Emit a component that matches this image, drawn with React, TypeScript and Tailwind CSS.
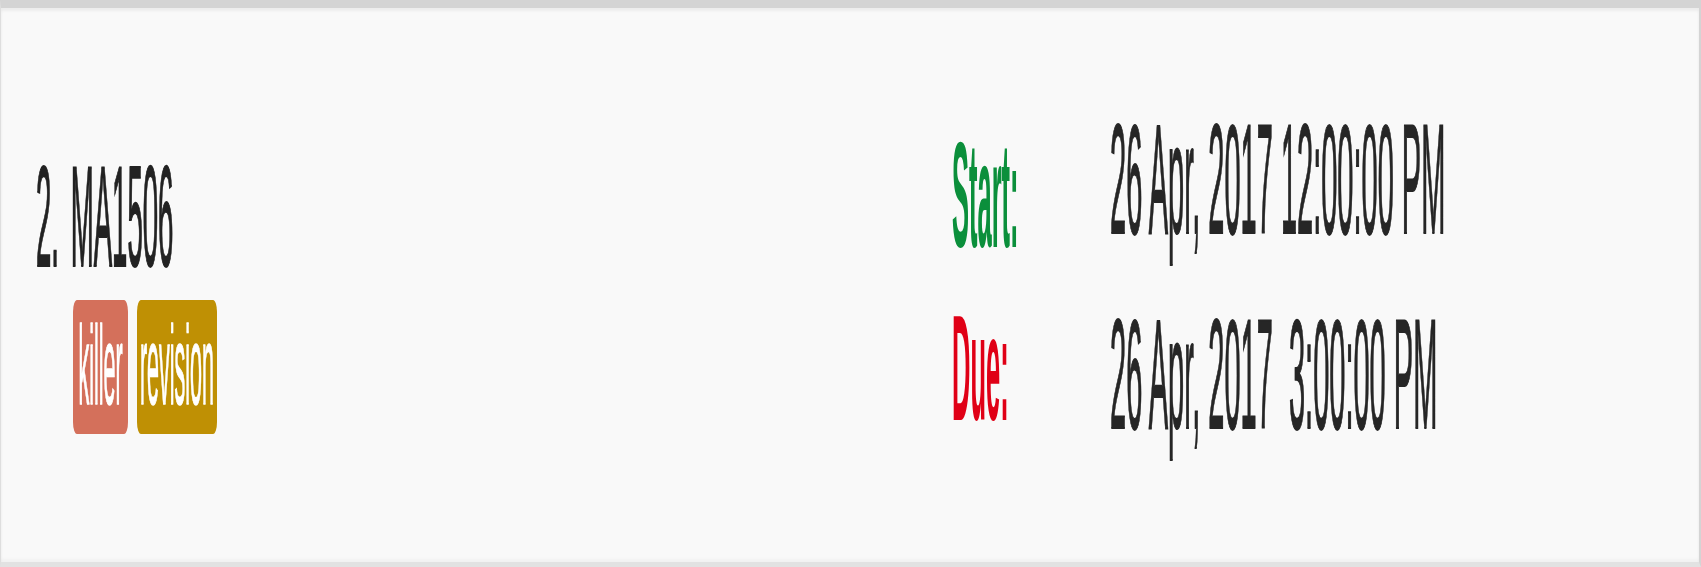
import type { ReactNode } from 'react'

// the reference is a squashed capture: glyphs are stretched tall, so each text run is scaled on y
const Tall = ({ children, box, text }: { children: ReactNode; box: string; text: string }) => (
	<div className={`flex items-center ${box}`}>
		<span className={`inline-block whitespace-pre leading-none ${text}`}>{children}</span>
	</div>
)

const Badge = ({ label, className }: { label: string; className: string }) => (
	<div className={`flex h-[134px] items-center justify-center rounded-[4px/12px] pt-[10px] ${className}`}>
		<span className="inline-block scale-y-[5.2] text-[21.5px] leading-none text-white [-webkit-text-stroke:0.3px_currentcolor]">{label}</span>
	</div>
)

export default function App() {
	return (
		<div className="h-[567px] w-full font-['Liberation_Sans',Arial,sans-serif]">
			<div className="flex h-full border-t-[8px] border-r-[2px] border-b-[5px] border-l border-t-[#d4d4d4] border-r-[#d4d4d4] border-b-[#e2e2e2] border-l-[#dedede] bg-[#f9f9f9] shadow-[inset_0_3px_3px_rgba(0,0,0,0.05),inset_0_-3px_3px_rgba(0,0,0,0.03)]">
				<div className="w-[951px] shrink-0 pt-[160px] pl-[35px]">
					<Tall box="h-[102px]" text="scale-y-[5.15] text-[27.6px] text-[#222] [word-spacing:4px] [-webkit-text-stroke:0.4px_currentcolor]">
						2. MA1506
					</Tall>
					<div className="mt-[30px] ml-[37px] flex gap-[9px]">
						<Badge label="killer" className="w-[55px] bg-[#d4705b]" />
						<Badge label="revision" className="w-[80px] bg-[#bf9004]" />
					</div>
				</div>

				<div className="pt-[119px]">
					<div className="flex items-start">
						<Tall box="mt-[18px] h-[108px] w-[158px]" text="scale-y-[5.87] text-[25.5px] font-bold text-[#0b8f3b]">
							Start:
						</Tall>
						<Tall box="h-[111px]" text="scale-y-[5.35] text-[29px] text-[#262626] [-webkit-text-stroke:0.35px_currentcolor]">
							26 Apr, 2017 12:00:00 PM
						</Tall>
					</div>
					<div className="mt-[65px] flex items-start">
						<Tall box="h-[107px] w-[158px]" text="scale-y-[5.87] text-[25.5px] font-bold text-[#e00016]">
							Due:
						</Tall>
						<Tall box="mt-[4px] h-[110px]" text="scale-y-[5.35] text-[29px] text-[#262626] [-webkit-text-stroke:0.35px_currentcolor]">
							26 Apr, 2017  3:00:00 PM
						</Tall>
					</div>
				</div>
			</div>
		</div>
	)
}
